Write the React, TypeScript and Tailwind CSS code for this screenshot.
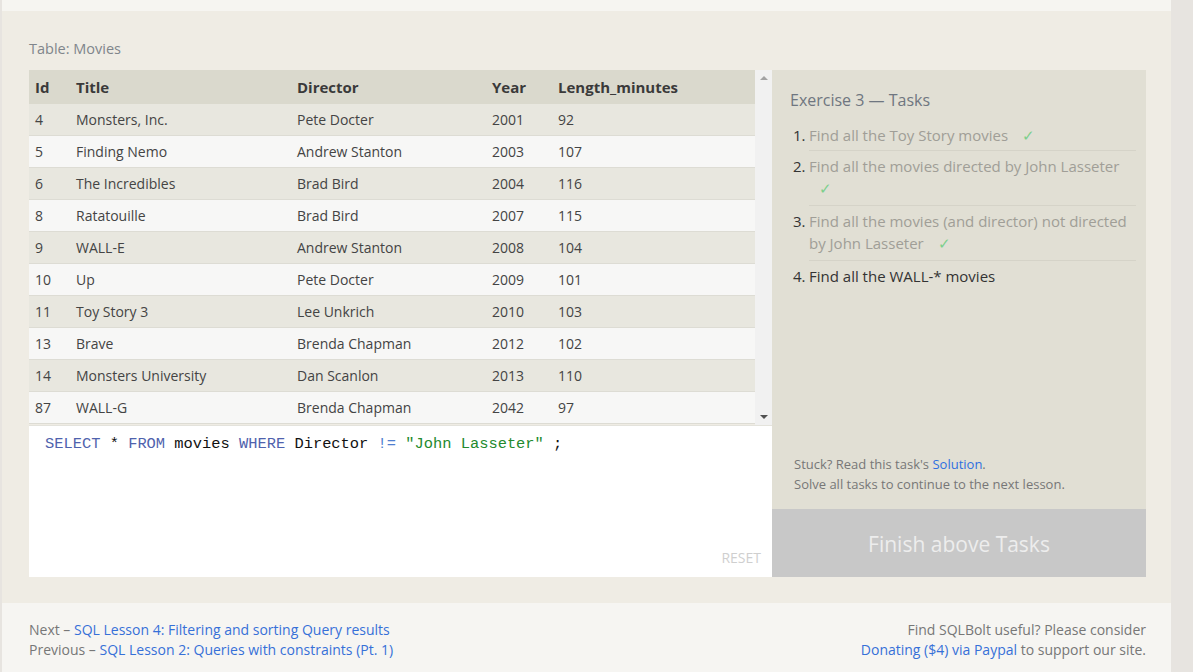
import React from "react";

const rows: [string, string, string, string, string][] = [
  ["4", "Monsters, Inc.", "Pete Docter", "2001", "92"],
  ["5", "Finding Nemo", "Andrew Stanton", "2003", "107"],
  ["6", "The Incredibles", "Brad Bird", "2004", "116"],
  ["8", "Ratatouille", "Brad Bird", "2007", "115"],
  ["9", "WALL-E", "Andrew Stanton", "2008", "104"],
  ["10", "Up", "Pete Docter", "2009", "101"],
  ["11", "Toy Story 3", "Lee Unkrich", "2010", "103"],
  ["13", "Brave", "Brenda Chapman", "2012", "102"],
  ["14", "Monsters University", "Dan Scanlon", "2013", "110"],
  ["87", "WALL-G", "Brenda Chapman", "2042", "97"],
];

const grid = "grid grid-cols-[41px_221px_195px_66px_1fr]";

function Check() {
  return <span className="ml-[10px] text-[#7ccf8c]">✓</span>;
}

export default function App() {
  return (
    <div
      className="w-[1193px] h-[672px] overflow-hidden bg-[#e7e4e0] flex"
      style={{ fontFamily: '"Open Sans", "Noto Sans", sans-serif' }}
    >
      <div className="w-[2px]" />
      <div className="w-[1169px] flex flex-col">
        <div className="h-[11px] bg-[#f6f5f1]" />
        <div className="bg-[#efece4] pt-[28px] pl-[27px] pr-[25px] pb-[26px] h-[592px]">
          <div className="text-[14.5px] text-[#80858b] leading-[20px] mb-[11px]">Table: Movies</div>
          <div className="flex">
            <div className="w-[743px] flex flex-col">
              <div className="flex h-[355px]">
                <div className="w-[726px] text-[14px] text-[#444]">
                  <div className={`${grid} h-[34px] items-center bg-[#dad9cd] font-bold text-[15px] text-[#3a3a3a]`}>
                    <div className="pl-[6px]">Id</div>
                    <div className="pl-[6px]">Title</div>
                    <div className="pl-[6px]">Director</div>
                    <div className="pl-[6px]">Year</div>
                    <div className="pl-[6px]">Length_minutes</div>
                  </div>
                  {rows.map((r, i) => (
                    <div
                      key={r[0]}
                      className={`${grid} h-[32px] items-center border-b border-[#dddcd4] ${
                        i % 2 === 0 ? "bg-[#e8e7df]" : "bg-[#f7f7f6]"
                      }`}
                    >
                      {r.map((c, j) => (
                        <div key={j} className="pl-[6px] whitespace-nowrap">
                          {c}
                        </div>
                      ))}
                    </div>
                  ))}
                </div>
                <div className="w-[17px] bg-[#f1f1f1] flex flex-col justify-between items-center py-[6px]">
                  <div className="w-0 h-0 border-l-[4px] border-r-[4px] border-b-[4px] border-l-transparent border-r-transparent border-b-[#a3a3a3]" />
                  <div className="w-0 h-0 border-l-[4px] border-r-[4px] border-t-[4px] border-l-transparent border-r-transparent border-t-[#505050]" />
                </div>
              </div>
              <div className="bg-white h-[152px] relative border-t border-[#e4e3dc]">
                <div
                  className="pl-[16px] pt-[8px] text-[15.4px] leading-[20px] whitespace-pre text-[#111]"
                  style={{ fontFamily: '"Liberation Mono", "DejaVu Sans Mono", monospace' }}
                >
                  <span className="text-[#4f62ad]">SELECT</span> * <span className="text-[#4f62ad]">FROM</span> movies{" "}
                  <span className="text-[#4f62ad]">WHERE</span> Director <span className="text-[#4f7fd0]">!=</span>{" "}
                  <span className="text-[#238a2e]">"John Lasseter"</span> ;
                </div>
                <div className="absolute right-[11px] bottom-[9px] text-[14px] text-[#cfcfcf]">RESET</div>
              </div>
            </div>
            <div className="w-[374px] flex flex-col bg-[#e1dfd4]">
              <div className="flex-1 pl-[18px] pr-[10px] pt-[19px]">
                <div className="text-[16px] text-[#6f7680] leading-[22px] mb-[13px]">Exercise 3 — Tasks</div>
                <ol className="text-[15px] leading-[22px]">
                  <li className="flex">
                    <span className="w-[19px] pl-[3px] text-[#333]">1.</span>
                    <span className="flex-1 text-[#a09e97] border-b border-[#d5d3c8] pb-[4px]">
                      Find all the Toy Story movies <Check />
                    </span>
                  </li>
                  <li className="flex pt-[4px]">
                    <span className="w-[19px] pl-[3px] text-[#333]">2.</span>
                    <span className="flex-1 text-[#a09e97] border-b border-[#d5d3c8] pb-[6px]">
                      Find all the movies directed by John Lasseter <Check />
                    </span>
                  </li>
                  <li className="flex pt-[4px]">
                    <span className="w-[19px] pl-[3px] text-[#333]">3.</span>
                    <span className="flex-1 text-[#a09e97] border-b border-[#d5d3c8] pb-[6px]">
                      Find all the movies (and director) not directed by John Lasseter <Check />
                    </span>
                  </li>
                  <li className="flex pt-[4px]">
                    <span className="w-[19px] pl-[3px] text-[#333]">4.</span>
                    <span className="flex-1 text-[#333]">Find all the WALL-* movies</span>
                  </li>
                </ol>
              </div>
              <div className="px-[22px] pb-[15px] text-[13px] leading-[20px] text-[#777]">
                <div>
                  Stuck? Read this task's <span className="text-[#2f6fe0]">Solution</span>.
                </div>
                <div>Solve all tasks to continue to the next lesson.</div>
              </div>
              <div className="h-[68px] bg-[#c8c8c8] flex items-center justify-center pt-[4px] text-[21px] text-[#ededed]">
                Finish above Tasks
              </div>
            </div>
          </div>
        </div>
        <div className="flex-1 bg-[#f6f5f2] pt-[17px] pl-[27px] pr-[25px] flex justify-between text-[14px] leading-[20px] text-[#777]">
          <div>
            <div>
              Next – <span className="text-[#3670d8]">SQL Lesson 4: Filtering and sorting Query results</span>
            </div>
            <div>
              Previous – <span className="text-[#3670d8]">SQL Lesson 2: Queries with constraints (Pt. 1)</span>
            </div>
          </div>
          <div className="text-right">
            <div>Find SQLBolt useful? Please consider</div>
            <div>
              <span className="text-[#3670d8]">Donating ($4) via Paypal</span> to support our site.
            </div>
          </div>
        </div>
      </div>
      <div className="flex-1" />
    </div>
  );
}
